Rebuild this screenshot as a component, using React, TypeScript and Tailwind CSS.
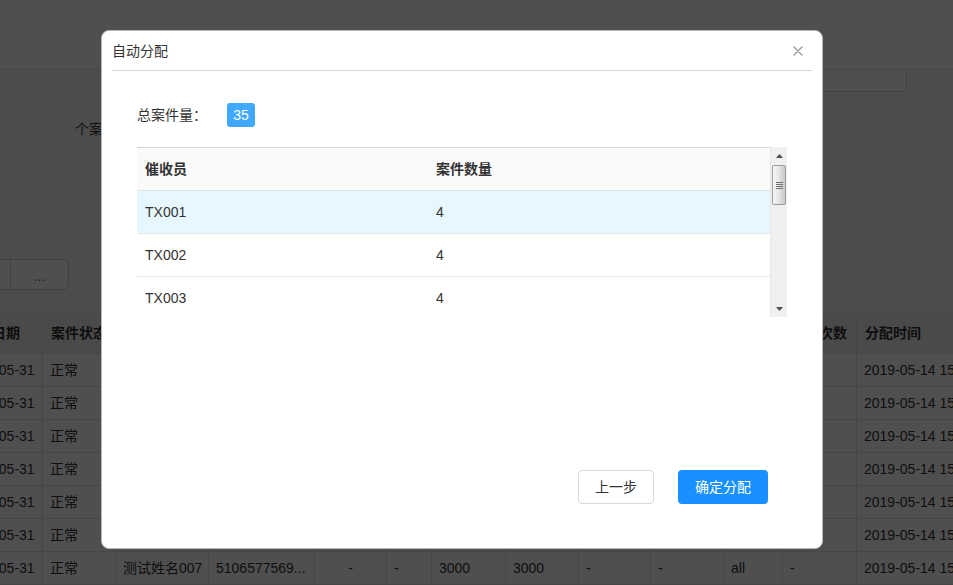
import React from "react";

const font = "font-['Liberation_Sans','Noto_Sans_CJK_SC',sans-serif]";

const bgCols = [
  "w-[87px]",
  "w-[73px]",
  "w-[93px]",
  "w-[106px]",
  "w-[72px] justify-center",
  "w-[45px]",
  "w-[74px]",
  "w-[73px]",
  "w-[72px]",
  "w-[73px]",
  "w-[59px]",
  "w-[74px]",
  "w-[160px]",
];

const bgHead = [
  "委案日期",
  "案件状态",
  "客户姓名",
  "身份证号",
  "手机号",
  "地区",
  "委案金额",
  "欠款金额",
  "最后跟进",
  "跟进状态",
  "催收员",
  "催收次数",
  "分配时间",
];

const bgRows = [1, 2, 3, 4, 5, 6, 7].map((n) => [
  "2019-05-31",
  "正常",
  `测试姓名00${n}`,
  "5106577569...",
  "-",
  "-",
  "3000",
  "3000",
  "-",
  "-",
  "all",
  "-",
  "2019-05-14 15:30:21",
]);

const collectors = [
  { name: "TX001", count: 4 },
  { name: "TX002", count: 4 },
  { name: "TX003", count: 4 },
  { name: "TX004", count: 4 },
];

function BackgroundPage() {
  return (
    <div className="flex flex-col h-full bg-[#f5f5f5] text-[#333] text-[14px]">
      {/* top bar */}
      <div className="h-[70px] shrink-0 bg-white border-b border-[#e4e4e4]" />

      {/* search box under the bar */}
      <div className="flex justify-end pr-[46px]">
        <div className="w-[220px] h-[22px] bg-white border-x border-b border-[#cfcfcf] rounded-b-[4px]" />
      </div>

      <div className="mt-[27px] pl-[75px] leading-[20px]">个案分配方式：</div>

      {/* button group */}
      <div className="mt-[120px] flex">
        <div className="flex h-[31px] w-[69px] bg-white border border-l-0 border-[#cfcfcf] rounded-r-[6px]">
          <div className="w-[11px] border-r border-[#cfcfcf]" />
          <div className="flex-1 flex items-center justify-center text-[#666] text-[14px] pt-[4px]">...</div>
        </div>
      </div>

      {/* table */}
      <div className="mt-[23px] ml-[-44px] bg-white">
        <div className="flex h-[41px] bg-[#eeeeee] font-bold border-b border-[#e0e0e0]">
          {bgHead.map((h, i) => (
            <div
              key={i}
              className={`${bgCols[i]} shrink-0 flex items-center px-[8px] border-r border-[#e0e0e0] whitespace-nowrap overflow-hidden`}
            >
              {h}
            </div>
          ))}
        </div>
        {bgRows.map((row, r) => (
          <div key={r} className="flex h-[33px] border-b border-[#e0e0e0]">
            {row.map((c, i) => (
              <div
                key={i}
                className={`${bgCols[i]} shrink-0 flex items-center px-[7px] border-r border-[#e0e0e0] whitespace-nowrap overflow-hidden`}
              >
                {c}
              </div>
            ))}
          </div>
        ))}
      </div>
    </div>
  );
}

function Scrollbar() {
  return (
    <div className="w-[17px] h-[170px] shrink-0 flex flex-col bg-[#f0f0f0] border-l border-[#e6e6e6]">
      <div className="h-[18px] flex items-center justify-center">
        <svg width="7" height="4" viewBox="0 0 7 4">
          <path d="M0 4 L3.5 0 L7 4 Z" fill="#505050" />
        </svg>
      </div>
      <div className="mx-[1px] h-[40px] rounded-[2px] border border-[#9c9c9c] bg-gradient-to-r from-[#f6f6f6] via-[#e4e4e4] to-[#c8c8c8] flex flex-col items-center justify-center gap-[1px]">
        <div className="w-[7px] h-[1px] bg-[#707070]" />
        <div className="w-[7px] h-[1px] bg-[#707070]" />
        <div className="w-[7px] h-[1px] bg-[#707070]" />
        <div className="w-[7px] h-[1px] bg-[#707070]" />
      </div>
      <div className="flex-1" />
      <div className="h-[16px] flex items-center justify-center">
        <svg width="7" height="4" viewBox="0 0 7 4">
          <path d="M0 0 L7 0 L3.5 4 Z" fill="#505050" />
        </svg>
      </div>
    </div>
  );
}

function AssignDialog() {
  return (
    <div className="absolute left-[101px] top-[30px] w-[722px] h-[519px] bg-white rounded-[8px] border border-[#b3b8c0] px-[10px] text-[#333] text-[14px]">
      <div className="h-[40px] border-b border-[#d6d6d6] flex items-center justify-between">
        <span className="leading-[20px]">自动分配</span>
        <button className="mr-[9px] flex items-center justify-center">
          <svg width="10" height="10" viewBox="0 0 10 10">
            <path d="M1 1 L9 9 M9 1 L1 9" stroke="#a3a3a3" strokeWidth="1.6" strokeLinecap="round" />
          </svg>
        </button>
      </div>

      <div className="px-[25px]">
        <div className="mt-[32px] h-[24px] flex items-center">
          <span className="w-[70px]">总案件量：</span>
          <span className="ml-[20px] w-[28px] h-[24px] rounded-[3px] bg-[#40a9ff] text-white flex items-center justify-center">
            35
          </span>
        </div>

        <div className="mt-[20px] flex">
          <div className="w-[633px] h-[170px] overflow-hidden border-t border-[#d4d4d4]">
            <div className="flex h-[43px] bg-[#fafafa] border-b border-[#e3e3e3] font-bold">
              <div className="w-[291px] pl-[8px] flex items-center">催收员</div>
              <div className="flex-1 pl-[8px] flex items-center">案件数量</div>
            </div>
            {collectors.map((c, i) => (
              <div
                key={c.name}
                className={`flex h-[43px] border-b border-[#e8e8e8] ${i === 0 ? "bg-[#e6f7ff]" : "bg-white"}`}
              >
                <div className="w-[291px] pl-[8px] flex items-center">{c.name}</div>
                <div className="flex-1 pl-[8px] flex items-center">{c.count}</div>
              </div>
            ))}
          </div>
          <Scrollbar />
        </div>

        <div className="mt-[153px] mr-[19px] flex justify-end gap-[24px]">
          <button className="w-[76px] h-[34px] rounded-[4px] border border-[#d9d9d9] bg-white text-[#333]">
            上一步
          </button>
          <button className="w-[90px] h-[34px] rounded-[4px] bg-[#1890ff] text-white">确定分配</button>
        </div>
      </div>
    </div>
  );
}

export default function App() {
  return (
    <div className={`relative w-[953px] h-[585px] overflow-hidden ${font}`}>
      <BackgroundPage />
      {/* mask */}
      <div className="absolute inset-0 bg-black/[.69]" />
      <AssignDialog />
    </div>
  );
}
